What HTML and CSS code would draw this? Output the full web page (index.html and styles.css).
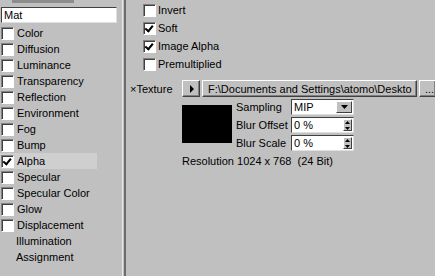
FILE: index.html
```html
<!DOCTYPE html>
<html lang="en">
<head>
    <meta charset="UTF-8">
    <title>Material Editor - Alpha</title>
    <link rel="stylesheet" href="styles.css">
</head>
<body>
    <div class="sidebar">
        <div class="preview-bar"></div>
        <div class="name-field">Mat</div>
        <ul class="channels">
            <li><span class="box"></span>Color</li>
            <li><span class="box"></span>Diffusion</li>
            <li><span class="box"></span>Luminance</li>
            <li><span class="box"></span>Transparency</li>
            <li><span class="box"></span>Reflection</li>
            <li><span class="box"></span>Environment</li>
            <li><span class="box"></span>Fog</li>
            <li><span class="box"></span>Bump</li>
            <li class="active"><span class="box checked"></span>Alpha</li>
            <li><span class="box"></span>Specular</li>
            <li><span class="box"></span>Specular Color</li>
            <li><span class="box"></span>Glow</li>
            <li><span class="box"></span>Displacement</li>
            <li class="plain">Illumination</li>
            <li class="plain">Assignment</li>
        </ul>
    </div>
    <div class="divider"></div>
    <div class="main">
        <div class="options">
            <div class="option"><span class="box"></span>Invert</div>
            <div class="option"><span class="box checked"></span>Soft</div>
            <div class="option"><span class="box checked"></span>Image Alpha</div>
            <div class="option"><span class="box"></span>Premultiplied</div>
        </div>
        <div class="texture-row">
            <span class="texture-label">&times;Texture</span>
            <span class="btn arrow-btn">
                <svg width="5" height="8" viewBox="0 0 5 8"><path d="M1 0 L5 4 L1 8 Z" fill="#000"/></svg>
            </span>
            <span class="btn path-btn">F:\Documents and Settings\atomo\Deskto</span>
            <span class="btn more-btn">...</span>
        </div>
        <div class="texture-body">
            <div class="swatch"></div>
            <div class="params">
                <div class="param">
                    <span class="param-label">Sampling</span>
                    <span class="field select">MIP
                        <span class="field-btn">
                            <svg width="7" height="4" viewBox="0 0 7 4"><path d="M0 0 L7 0 L3.5 4 Z" fill="#000"/></svg>
                        </span>
                    </span>
                </div>
                <div class="param">
                    <span class="param-label">Blur Offset</span>
                    <span class="field">0 %
                        <span class="field-btn spin">
                            <svg width="5" height="9" viewBox="0 0 5 9"><path d="M2.5 0 L5 3 L0 3 Z M0 6 L5 6 L2.5 9 Z" fill="#000"/></svg>
                        </span>
                    </span>
                </div>
                <div class="param">
                    <span class="param-label">Blur Scale</span>
                    <span class="field">0 %
                        <span class="field-btn spin">
                            <svg width="5" height="9" viewBox="0 0 5 9"><path d="M2.5 0 L5 3 L0 3 Z M0 6 L5 6 L2.5 9 Z" fill="#000"/></svg>
                        </span>
                    </span>
                </div>
            </div>
        </div>
        <div class="resolution">Resolution 1024 x 768&nbsp; (24 Bit)</div>
    </div>
</body>
</html>
```
FILE: styles.css
```css
body {
    margin: 0;
    width: 435px;
    height: 276px;
    overflow: hidden;
    display: flex;
    background: #c0c0c0;
    font-family: "Liberation Sans", Arial, sans-serif;
    font-size: 11px;
    color: #000;
}
.sidebar {
    width: 122px;
    display: flex;
    flex-direction: column;
}
.preview-bar {
    height: 3px;
    margin-left: 12px;
    width: 62px;
    background: #8c8c8c;
}
.name-field {
    margin: 4px 5px 0 1px;
    height: 14px;
    line-height: 14px;
    padding-left: 2px;
    background: #fff;
    border-top: 1px solid #404040;
    border-left: 1px solid #404040;
    border-right: 1px solid #dfdfdf;
    border-bottom: 1px solid #dfdfdf;
    font-size: 11px;
}
.channels {
    list-style: none;
    margin: 2px 0 0 0;
    padding: 0;
}
.channels li {
    height: 16px;
    display: flex;
    align-items: center;
    padding-left: 1px;
    width: 96px;
    white-space: nowrap;
}
.channels li.active {
    background: #cfcfcf;
}
.channels li.plain {
    padding-left: 16px;
}
.box {
    width: 11px;
    height: 11px;
    flex: none;
    background: #fff;
    border-top: 1px solid #808080;
    border-left: 1px solid #808080;
    border-right: 1px solid #fff;
    border-bottom: 1px solid #fff;
    box-shadow: inset 1px 1px 0 #404040;
    margin-right: 3px;
    position: relative;
}
.box.checked::after {
    content: "";
    position: absolute;
    left: 2px;
    top: 1px;
    width: 3px;
    height: 6px;
    border-right: 2px solid #000;
    border-bottom: 2px solid #000;
    transform: rotate(40deg);
    transform-origin: 60% 60%;
}
.divider {
    width: 1px;
    border-left: 1px solid #e8e8e8;
    border-right: 2px solid #6c6c6c;
}
.main {
    flex: 1;
    display: flex;
    flex-direction: column;
}
.options {
    margin: 1px 0 0 17px;
}
.option {
    height: 18px;
    display: flex;
    align-items: center;
}
.option .box {
    margin-right: 2px;
}
.texture-row {
    display: flex;
    align-items: center;
    margin-top: 6px;
    height: 19px;
    padding-left: 4px;
}
.texture-label {
    width: 52px;
}
.btn {
    height: 15px;
    display: flex;
    align-items: center;
    background: #c0c0c0;
    border-top: 1px solid #fff;
    border-left: 1px solid #fff;
    border-right: 1px solid #404040;
    border-bottom: 1px solid #404040;
    box-shadow: inset -1px -1px 0 #808080;
    margin-right: 2px;
    white-space: nowrap;
    overflow: hidden;
}
.arrow-btn {
    width: 16px;
    justify-content: center;
}
.path-btn {
    width: 208px;
    padding-left: 5px;
}
.more-btn {
    flex: 1;
    padding-left: 5px;
    margin-right: 0;
    border-right: none;
}
.texture-body {
    display: flex;
    margin-top: 0;
    padding-left: 56px;
}
.swatch {
    width: 50px;
    height: 38px;
    margin-top: 7px;
    background: #000;
}
.params {
    margin-left: 4px;
}
.param {
    height: 18px;
    display: flex;
    align-items: center;
}
.param-label {
    width: 55px;
}
.field {
    width: 59px;
    height: 14px;
    line-height: 14px;
    padding-left: 2px;
    background: #fff;
    border-top: 1px solid #404040;
    border-left: 1px solid #404040;
    border-right: 1px solid #dfdfdf;
    border-bottom: 1px solid #dfdfdf;
    display: flex;
    justify-content: space-between;
}
.field-btn {
    width: 12px;
    height: 12px;
    margin: 1px 1px 0 0;
    display: flex;
    align-items: center;
    justify-content: center;
    background: #c0c0c0;
    border-top: 1px solid #fff;
    border-left: 1px solid #fff;
    border-right: 1px solid #404040;
    border-bottom: 1px solid #404040;
    box-sizing: border-box;
}
.select .field-btn {
    width: 16px;
}
.spin {
    width: 9px;
}
.resolution {
    padding-left: 56px;
    margin-top: 3px;
}
```
